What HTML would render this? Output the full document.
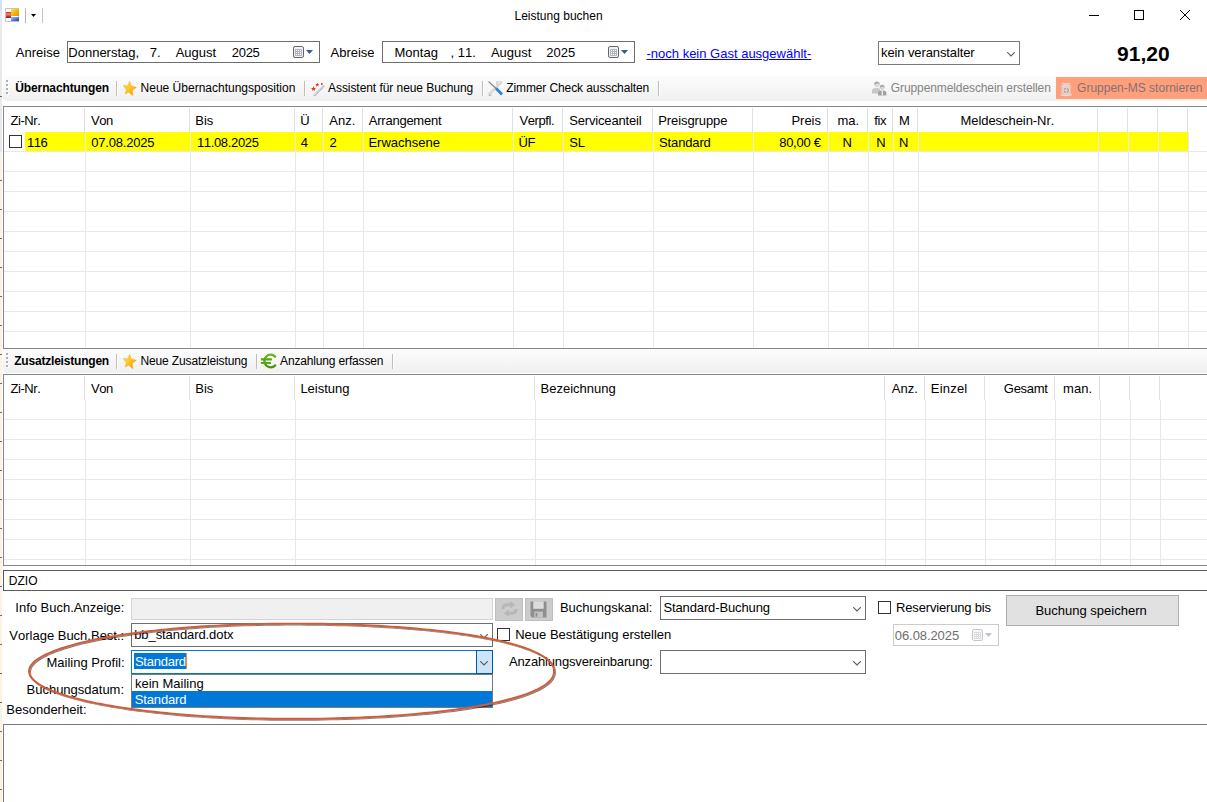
<!DOCTYPE html>
<html lang="de">
<head>
<meta charset="utf-8">
<title>Leistung buchen</title>
<style>
html,body{margin:0;padding:0;}
body{width:1207px;height:802px;overflow:hidden;background:#fff;position:relative;
  font-family:"Liberation Sans",sans-serif;font-size:13px;color:#000;font-kerning:none;}
.a{position:absolute;white-space:nowrap;line-height:1;}
.t{font-size:13px;line-height:16px;height:16px;}
.ui{font-size:12px;line-height:14px;height:14px;}
.sm{font-size:12px;line-height:14px;height:14px;}
.big{font-size:21px;line-height:24px;height:24px;font-weight:bold;}
.box{position:absolute;box-sizing:border-box;background:#fff;border:1px solid #7a7a7a;}
.vl{position:absolute;width:1px;background:#e8e8ec;}
.hl{position:absolute;height:1px;background:#e8e8ec;}
.tb{position:absolute;left:3px;width:1204px;height:25px;background:linear-gradient(#fcfcfc,#f6f6f6 55%,#f0f0f0);border-radius:3px 0 0 3px;}
.sep{position:absolute;width:1px;height:15px;background:#bdbdbd;box-shadow:1px 0 0 #fff;}
.grip{position:absolute;width:2px;height:2px;background:#aeaeae;box-shadow:1px 1px 0 #fff;}
.cb{position:absolute;box-sizing:border-box;width:13px;height:13px;border:1px solid #333;background:#fff;}
</style>
</head>
<body>
<div class="a" style="left:0;top:0;width:3px;height:802px;background:#fff;"></div>
<div class="a" style="left:0;top:0;width:2px;height:178px;background:#e9e9e9;"></div>
<div class="a" style="left:0;top:0;width:2px;height:11px;background:#cfe0f7;"></div>
<div class="a" style="left:0;top:96px;width:2px;height:1px;background:#666;"></div>
<div class="a" style="left:0;top:152px;width:2px;height:650px;background:repeating-linear-gradient(#fcf2e2 0,#fcf2e2 28px,#6a6a6a 28px,#6a6a6a 29px);"></div>
<svg class="a" style="left:5px;top:8px" width="14" height="14" viewBox="0 0 14 14">
<defs>
<linearGradient id="ir" x1="0" y1="0" x2="0" y2="1"><stop offset="0" stop-color="#e8260e"/><stop offset="0.350" stop-color="#f08a84"/><stop offset="1" stop-color="#9a0606"/></linearGradient>
<linearGradient id="iy" x1="0" y1="0" x2="1" y2="1"><stop offset="0" stop-color="#ffe25a"/><stop offset="0.500" stop-color="#f2b800"/><stop offset="1" stop-color="#d99a00"/></linearGradient>
<linearGradient id="ib" x1="0" y1="0" x2="1" y2="1"><stop offset="0" stop-color="#a6c6ff"/><stop offset="0.500" stop-color="#4a86f0"/><stop offset="1" stop-color="#1440a8"/></linearGradient>
</defs>
<rect x="0.500" y="0.500" width="13" height="13" fill="#fff" stroke="#c2c2cc"/>
<rect x="1" y="4" width="5" height="6" fill="url(#ir)"/>
<rect x="6" y="1" width="8" height="7" fill="url(#iy)"/>
<rect x="6" y="9" width="8" height="4" fill="url(#ib)"/>
</svg>
<div class="a" style="left:25px;top:8px;width:1px;height:15px;background:#b6b6b6"></div>
<div class="a" style="left:42px;top:8px;width:1px;height:15px;background:#c2c2c2"></div>
<svg class="a" style="left:31px;top:14px" width="5" height="3" viewBox="0 0 5 3"><path d="M0 0h5L2.500 3z" fill="#000"/></svg>
<svg class="a" style="left:1088px;top:9px" width="104" height="14" viewBox="0 0 104 14" fill="none" stroke="#000" stroke-width="1">
  <path d="M1 6.500h10"/>
  <rect x="46.500" y="1.500" width="9" height="9"/>
  <path d="M92 1l10 10M102 1L92 11"/>
</svg>
<div class="box" style="left:67px;top:41px;width:253px;height:22px;border-color:#6e6e6e;"></div>
<div class="box" style="left:382px;top:41px;width:253px;height:22px;border-color:#6e6e6e;"></div>
<div class="box" style="left:878px;top:41px;width:142px;height:24px;border-color:#7a7a7a;"></div>
<svg class="a" style="left:1007px;top:52px" width="8" height="5" viewBox="0 0 8 5" fill="none" stroke="#5a5a5a" stroke-width="1.100"><path d="M0.200 0.200L4 4L7.800 0.200"/></svg>
<svg class="a" style="left:293px;top:46px" width="21" height="13" viewBox="0 0 21 13">
<rect x="0.500" y="0.500" width="10" height="11" rx="1.600" fill="#eef2fb" stroke="#6b5f5f"/>
<rect x="2" y="3" width="7" height="7" fill="#b2b6be"/>
<path d="M3 4h1v1h-1zM5 4h1v1h-1zM7 4h1v1h-1zM3 6h1v1h-1zM5 6h1v1h-1zM7 6h1v1h-1zM3 8h1v1h-1zM5 8h1v1h-1zM7 8h1v1h-1z" fill="#fff"/>
<path d="M13 4h7l-3.500 4z" fill="#3b5a8c"/>
</svg>
<svg class="a" style="left:608px;top:46px" width="21" height="13" viewBox="0 0 21 13">
<rect x="0.500" y="0.500" width="10" height="11" rx="1.600" fill="#eef2fb" stroke="#6b5f5f"/>
<rect x="2" y="3" width="7" height="7" fill="#b2b6be"/>
<path d="M3 4h1v1h-1zM5 4h1v1h-1zM7 4h1v1h-1zM3 6h1v1h-1zM5 6h1v1h-1zM7 6h1v1h-1zM3 8h1v1h-1zM5 8h1v1h-1zM7 8h1v1h-1z" fill="#fff"/>
<path d="M13 4h7l-3.500 4z" fill="#3b5a8c"/>
</svg>
<div class="tb" style="top:76px;"></div>
<div class="grip" style="left:6px;top:80px;"></div>
<div class="grip" style="left:6px;top:84px;"></div>
<div class="grip" style="left:6px;top:88px;"></div>
<div class="grip" style="left:6px;top:92px;"></div>
<div class="sep" style="left:116px;top:81px;"></div>
<div class="sep" style="left:304px;top:81px;"></div>
<div class="sep" style="left:482px;top:81px;"></div>
<div class="sep" style="left:658px;top:81px;"></div>
<div class="a" style="left:1056px;top:77px;width:151px;height:22px;background:#ffa07a;"></div>
<svg class="a" style="left:123px;top:81px" width="15" height="16" viewBox="0 0 15 16">
<defs><linearGradient id="sg12381" x1="0" y1="0" x2="1" y2="1"><stop offset="0" stop-color="#ffe64a"/><stop offset="0.500" stop-color="#ffc420"/><stop offset="1" stop-color="#f08a10"/></linearGradient></defs>
<path d="M6.600 0.200L8.200 5L13.400 6.300L9.300 9.400L9.900 14.800L5.700 11.300L2.100 13L3.400 8.600L0 4.400L4.700 4.900z" fill="url(#sg12381)" stroke="#f0a010" stroke-width="0.400"/>
</svg>
<svg class="a" style="left:311px;top:82px" width="14" height="15" viewBox="0 0 14 15">
<path d="M3.400 13.300L12.600 4" stroke="#c9d6e4" stroke-width="2.200" stroke-linecap="round"/>
<path d="M4 13.600L13 4.600" stroke="#5d8ab6" stroke-width="0.900" stroke-dasharray="1 1"/>
<path d="M2.500 4.300l0.700 1.700l1.900 0.100l-1.500 1.200l0.500 1.800l-1.600-1l-1.600 1l0.500-1.800l-1.400-1.200l1.800-0.100z" fill="#e63a0e"/>
<path d="M6.300 0.600l0.600 1.400l1.500 0.100l-1.200 1l0.400 1.500l-1.300-0.800l-1.300 0.800l0.400-1.500l-1.200-1l1.500-0.100z" fill="#e63a0e"/>
<rect x="10" y="1" width="1.600" height="2" fill="#ee4a10"/>
</svg>
<svg class="a" style="left:488px;top:81px" width="16" height="16" viewBox="0 0 16 16">
<path d="M1 13.500L10 4.500" stroke="#dcdcdc" stroke-width="3" stroke-linecap="round"/>
<path d="M1.200 14.500l2.300-0.600" stroke="#9c9c9c" stroke-width="0.800"/>
<path d="M10 4.500a2.600 2.600 0 1 1 3.600 -2.300l-1.600 1.300l-1.600-0.400" fill="#e4e4e4" stroke="#b0b0b0" stroke-width="0.600"/>
<path d="M0.500 0.500L8 7.500" stroke="#868686" stroke-width="1.100"/>
<path d="M8 7.300L14 13.500" stroke="#2a7fd9" stroke-width="2.700" stroke-linecap="butt"/>
</svg>
<svg class="a" style="left:871px;top:81px" width="17" height="15" viewBox="0 0 17 15">
<path d="M1 12.500v-3.200c0-1.500 2-2.300 4.800-2.300s3.200 0.800 3.200 2.300v3.200z" fill="#c6c6c6"/>
<circle cx="5.900" cy="3.600" r="2.600" fill="#dadada"/>
<path d="M3.100 3.600c0-2 1.200-3.100 2.800-3.100s2.900 1.200 2.900 3c-1-0.200-1.500-0.900-2-1.700c-0.800 1-2 1.600-3.700 1.800z" fill="#a6a6a6"/>
<path d="M7 14.500v-2.500c0-1.700 1.600-2.500 4.200-2.500s4.200 0.800 4.200 2.500v2.500z" fill="#a2a2a2"/>
<path d="M10.600 9.500h1.400v5h-1.400z" fill="#e8e8e8"/>
<circle cx="11.200" cy="6.600" r="2.400" fill="#d4d4d4"/>
<path d="M8.700 6.500c0-1.800 1.100-2.800 2.500-2.800s2.600 1 2.600 2.700c-0.900-0.200-1.400-0.700-1.800-1.400c-0.800 0.900-1.800 1.300-3.300 1.500z" fill="#a2a2a2"/>
</svg>
<svg class="a" style="left:1060px;top:83px" width="13" height="14" viewBox="0 0 13 14">
<ellipse cx="6.200" cy="11.800" rx="6" ry="1.400" fill="#f2d8cf"/>
<path d="M1.600 0.800c0-0.500 0.400-0.800 1-0.800h7c0.600 0 1 0.300 1 0.800v11.200h-9z" fill="#e9cfc7"/>
<path d="M2.200 1.200l0.800 0.600M10 1.200l-0.800 0.600M2.300 11l0.800-0.500" stroke="#a58f8a" stroke-width="0.700"/>
<circle cx="6.200" cy="7.400" r="2.100" fill="none" stroke="#a89690" stroke-width="1.100" stroke-dasharray="2.200 1"/>
</svg>
<div class="a" style="left:3px;top:106px;width:1210px;height:243px;box-sizing:border-box;border:1px solid #828790;background:#fff;"></div>
<div class="vl" style="left:84px;top:108px;height:24px;background:#e0e0e4;"></div>
<div class="vl" style="left:85px;top:132px;height:216px;"></div>
<div class="vl" style="left:189px;top:108px;height:24px;background:#e0e0e4;"></div>
<div class="vl" style="left:190px;top:132px;height:216px;"></div>
<div class="vl" style="left:294px;top:108px;height:24px;background:#e0e0e4;"></div>
<div class="vl" style="left:295px;top:132px;height:216px;"></div>
<div class="vl" style="left:322px;top:108px;height:24px;background:#e0e0e4;"></div>
<div class="vl" style="left:323px;top:132px;height:216px;"></div>
<div class="vl" style="left:362px;top:108px;height:24px;background:#e0e0e4;"></div>
<div class="vl" style="left:363px;top:132px;height:216px;"></div>
<div class="vl" style="left:512px;top:108px;height:24px;background:#e0e0e4;"></div>
<div class="vl" style="left:513px;top:132px;height:216px;"></div>
<div class="vl" style="left:562px;top:108px;height:24px;background:#e0e0e4;"></div>
<div class="vl" style="left:563px;top:132px;height:216px;"></div>
<div class="vl" style="left:652px;top:108px;height:24px;background:#e0e0e4;"></div>
<div class="vl" style="left:653px;top:132px;height:216px;"></div>
<div class="vl" style="left:752px;top:108px;height:24px;background:#e0e0e4;"></div>
<div class="vl" style="left:753px;top:132px;height:216px;"></div>
<div class="vl" style="left:827px;top:108px;height:24px;background:#e0e0e4;"></div>
<div class="vl" style="left:828px;top:132px;height:216px;"></div>
<div class="vl" style="left:867px;top:108px;height:24px;background:#e0e0e4;"></div>
<div class="vl" style="left:868px;top:132px;height:216px;"></div>
<div class="vl" style="left:892px;top:108px;height:24px;background:#e0e0e4;"></div>
<div class="vl" style="left:893px;top:132px;height:216px;"></div>
<div class="vl" style="left:917px;top:108px;height:24px;background:#e0e0e4;"></div>
<div class="vl" style="left:918px;top:132px;height:216px;"></div>
<div class="vl" style="left:1097px;top:108px;height:24px;background:#e0e0e4;"></div>
<div class="vl" style="left:1098px;top:132px;height:216px;"></div>
<div class="vl" style="left:1127px;top:108px;height:24px;background:#e0e0e4;"></div>
<div class="vl" style="left:1128px;top:132px;height:216px;"></div>
<div class="vl" style="left:1157px;top:108px;height:24px;background:#e0e0e4;"></div>
<div class="vl" style="left:1158px;top:132px;height:216px;"></div>
<div class="vl" style="left:1187px;top:108px;height:24px;background:#e0e0e4;"></div>
<div class="vl" style="left:1188px;top:132px;height:216px;"></div>
<div class="hl" style="left:4px;top:151px;width:1203px;"></div>
<div class="hl" style="left:4px;top:171px;width:1203px;"></div>
<div class="hl" style="left:4px;top:191px;width:1203px;"></div>
<div class="hl" style="left:4px;top:211px;width:1203px;"></div>
<div class="hl" style="left:4px;top:231px;width:1203px;"></div>
<div class="hl" style="left:4px;top:251px;width:1203px;"></div>
<div class="hl" style="left:4px;top:271px;width:1203px;"></div>
<div class="hl" style="left:4px;top:291px;width:1203px;"></div>
<div class="hl" style="left:4px;top:311px;width:1203px;"></div>
<div class="hl" style="left:4px;top:331px;width:1203px;"></div>
<div class="a" style="left:25px;top:132px;width:1163px;height:19px;background:#ffff00;"></div>
<div class="vl" style="left:85px;top:132px;height:19px;background:#ebebef;"></div>
<div class="vl" style="left:190px;top:132px;height:19px;background:#ebebef;"></div>
<div class="vl" style="left:295px;top:132px;height:19px;background:#ebebef;"></div>
<div class="vl" style="left:323px;top:132px;height:19px;background:#ebebef;"></div>
<div class="vl" style="left:363px;top:132px;height:19px;background:#ebebef;"></div>
<div class="vl" style="left:513px;top:132px;height:19px;background:#ebebef;"></div>
<div class="vl" style="left:563px;top:132px;height:19px;background:#ebebef;"></div>
<div class="vl" style="left:653px;top:132px;height:19px;background:#ebebef;"></div>
<div class="vl" style="left:753px;top:132px;height:19px;background:#ebebef;"></div>
<div class="vl" style="left:828px;top:132px;height:19px;background:#ebebef;"></div>
<div class="vl" style="left:868px;top:132px;height:19px;background:#ebebef;"></div>
<div class="vl" style="left:893px;top:132px;height:19px;background:#ebebef;"></div>
<div class="vl" style="left:918px;top:132px;height:19px;background:#ebebef;"></div>
<div class="vl" style="left:1098px;top:132px;height:19px;background:#ebebef;"></div>
<div class="vl" style="left:1128px;top:132px;height:19px;background:#ebebef;"></div>
<div class="vl" style="left:1158px;top:132px;height:19px;background:#ebebef;"></div>
<div class="cb" style="left:9px;top:135px;"></div>
<div class="tb" style="top:349px;height:24px;border-radius:0 0 0 3px;"></div>
<div class="grip" style="left:6px;top:353px;"></div>
<div class="grip" style="left:6px;top:357px;"></div>
<div class="grip" style="left:6px;top:361px;"></div>
<div class="grip" style="left:6px;top:365px;"></div>
<div class="sep" style="left:116px;top:354px;"></div>
<div class="sep" style="left:256px;top:354px;"></div>
<div class="sep" style="left:392px;top:354px;"></div>
<svg class="a" style="left:123px;top:354px" width="15" height="16" viewBox="0 0 15 16">
<defs><linearGradient id="sg123354" x1="0" y1="0" x2="1" y2="1"><stop offset="0" stop-color="#ffe64a"/><stop offset="0.500" stop-color="#ffc420"/><stop offset="1" stop-color="#f08a10"/></linearGradient></defs>
<path d="M6.600 0.200L8.200 5L13.400 6.300L9.300 9.400L9.900 14.800L5.700 11.300L2.100 13L3.400 8.600L0 4.400L4.700 4.900z" fill="url(#sg123354)" stroke="#f0a010" stroke-width="0.400"/>
</svg>
<svg class="a" style="left:260px;top:353px" width="18" height="17" viewBox="0 0 18 17">
<defs><linearGradient id="eg" x1="0" y1="0" x2="0" y2="1"><stop offset="0" stop-color="#6ab41a"/><stop offset="1" stop-color="#46940a"/></linearGradient></defs>
<path d="M15.200 3.600A6.300 6.300 0 1 0 15.200 12.400" fill="none" stroke="url(#eg)" stroke-width="2.300" stroke-linecap="round"/>
<path d="M0.900 5.300h11v2.200h-11zM0.900 9h10.100v2h-10.100z" fill="#5aa612"/>
</svg>
<div class="a" style="left:3px;top:374px;width:1210px;height:192px;box-sizing:border-box;border:1px solid #828790;background:#fff;"></div>
<div class="vl" style="left:84px;top:376px;height:24px;background:#e0e0e4;"></div>
<div class="vl" style="left:85px;top:400px;height:165px;"></div>
<div class="vl" style="left:189px;top:376px;height:24px;background:#e0e0e4;"></div>
<div class="vl" style="left:190px;top:400px;height:165px;"></div>
<div class="vl" style="left:294px;top:376px;height:24px;background:#e0e0e4;"></div>
<div class="vl" style="left:295px;top:400px;height:165px;"></div>
<div class="vl" style="left:534px;top:376px;height:24px;background:#e0e0e4;"></div>
<div class="vl" style="left:535px;top:400px;height:165px;"></div>
<div class="vl" style="left:884px;top:376px;height:24px;background:#e0e0e4;"></div>
<div class="vl" style="left:885px;top:400px;height:165px;"></div>
<div class="vl" style="left:924px;top:376px;height:24px;background:#e0e0e4;"></div>
<div class="vl" style="left:925px;top:400px;height:165px;"></div>
<div class="vl" style="left:984px;top:376px;height:24px;background:#e0e0e4;"></div>
<div class="vl" style="left:985px;top:400px;height:165px;"></div>
<div class="vl" style="left:1054px;top:376px;height:24px;background:#e0e0e4;"></div>
<div class="vl" style="left:1055px;top:400px;height:165px;"></div>
<div class="vl" style="left:1099px;top:376px;height:24px;background:#e0e0e4;"></div>
<div class="vl" style="left:1100px;top:400px;height:165px;"></div>
<div class="vl" style="left:1129px;top:376px;height:24px;background:#e0e0e4;"></div>
<div class="vl" style="left:1130px;top:400px;height:165px;"></div>
<div class="vl" style="left:1159px;top:376px;height:24px;background:#e0e0e4;"></div>
<div class="vl" style="left:1160px;top:400px;height:165px;"></div>
<div class="hl" style="left:4px;top:419px;width:1203px;"></div>
<div class="hl" style="left:4px;top:439px;width:1203px;"></div>
<div class="hl" style="left:4px;top:459px;width:1203px;"></div>
<div class="hl" style="left:4px;top:479px;width:1203px;"></div>
<div class="hl" style="left:4px;top:499px;width:1203px;"></div>
<div class="hl" style="left:4px;top:519px;width:1203px;"></div>
<div class="hl" style="left:4px;top:539px;width:1203px;"></div>
<div class="hl" style="left:4px;top:559px;width:1203px;"></div>
<div class="box" style="left:3px;top:570px;width:1210px;height:21px;border-color:#5a5a5a;"></div>
<div class="box" style="left:131px;top:598px;width:362px;height:22px;background:#f0f0f0;border-color:#d4d4d4;"></div>
<div class="box" style="left:495px;top:598px;width:28px;height:23px;background:#cccccc;border-color:#bfbfbf;"></div>
<div class="box" style="left:525px;top:598px;width:28px;height:23px;background:#cccccc;border-color:#bfbfbf;"></div>
<svg class="a" style="left:501px;top:601px" width="17" height="16" viewBox="0 0 17 16">
<g fill="none" stroke="#b7b7b7" stroke-width="3" stroke-linecap="butt">
<path d="M1.800 8c0-3 2-4.300 4.800-4.300h3.400"/>
<path d="M15.200 8c0 3-2 4.300-4.800 4.300h-3.400"/>
</g>
<path d="M9.300 0l5 3.700l-5 3.700z" fill="#b7b7b7"/>
<path d="M7.700 16l-5-3.700l5-3.700z" fill="#b7b7b7"/>
</svg>
<svg class="a" style="left:530px;top:601px" width="17" height="17" viewBox="0 0 17 17">
<path d="M0.500 1.200c0-0.500 0.300-0.800 0.800-0.800h14.400c0.500 0 0.800 0.300 0.800 0.800v15.300h-14.500l-1.500-1.400z" fill="#8f8f8f"/>
<rect x="3.300" y="0.400" width="10.400" height="7.400" fill="#dcdcdc"/>
<rect x="4.300" y="10.600" width="8.600" height="5.900" fill="#c4c4c4"/>
<rect x="5.600" y="12" width="1.700" height="3.600" fill="#8a8a8a"/>
</svg>
<div class="box" style="left:660px;top:596px;width:206px;height:24px;border-color:#6e6e6e;"></div>
<svg class="a" style="left:853px;top:607px" width="8" height="5" viewBox="0 0 8 5" fill="none" stroke="#5a5a5a" stroke-width="1.100"><path d="M0.200 0.200L4 4L7.800 0.200"/></svg>
<div class="cb" style="left:878px;top:601px;"></div>
<div class="box" style="left:1006px;top:595px;width:173px;height:31px;background:#e1e1e1;border-color:#adadad;"></div>
<div class="box" style="left:131px;top:623px;width:362px;height:24px;border-color:#6e6e6e;"></div>
<svg class="a" style="left:480px;top:634px" width="8" height="5" viewBox="0 0 8 5" fill="none" stroke="#5a5a5a" stroke-width="1.100"><path d="M0.200 0.200L4 4L7.800 0.200"/></svg>
<div class="cb" style="left:497px;top:628px;"></div>
<div class="box" style="left:893px;top:624px;width:106px;height:22px;border-color:#cccccc;"></div>
<svg class="a" style="left:972px;top:629px" width="21" height="13" viewBox="0 0 21 13">
<rect x="0.500" y="0.500" width="10" height="11" rx="1.600" fill="#f6f7fa" stroke="#c9c6c6"/>
<rect x="2" y="3" width="7" height="7" fill="#d9dbdf"/>
<path d="M3 4h1v1h-1zM5 4h1v1h-1zM7 4h1v1h-1zM3 6h1v1h-1zM5 6h1v1h-1zM7 6h1v1h-1zM3 8h1v1h-1zM5 8h1v1h-1zM7 8h1v1h-1z" fill="#fff"/>
<path d="M13 4h7l-3.500 4z" fill="#bfc3ca"/>
</svg>
<div class="box" style="left:131px;top:650px;width:362px;height:24px;border-color:#0078d7;"></div>
<div class="a" style="left:134px;top:653px;width:52px;height:16px;background:#0078d7;"></div>
<div class="a" style="left:186px;top:653px;width:1px;height:16px;background:#ff8728;"></div>
<div class="box" style="left:476px;top:650px;width:17px;height:24px;background:#cce4f7;border-color:#0058a8;"></div>
<svg class="a" style="left:480px;top:661px" width="8" height="5" viewBox="0 0 8 5" fill="none" stroke="#5a5a5a" stroke-width="1.100"><path d="M0.200 0.200L4 4L7.800 0.200"/></svg>
<div class="box" style="left:660px;top:650px;width:206px;height:24px;border-color:#6e6e6e;"></div>
<svg class="a" style="left:853px;top:661px" width="8" height="5" viewBox="0 0 8 5" fill="none" stroke="#5a5a5a" stroke-width="1.100"><path d="M0.200 0.200L4 4L7.800 0.200"/></svg>
<div class="box" style="left:131px;top:674px;width:362px;height:34px;border-color:#7a7a7a;"></div>
<div class="a" style="left:132px;top:691px;width:360px;height:16px;background:#0078d7;"></div>
<div class="box" style="left:3px;top:724px;width:1210px;height:90px;border-color:#7a7a7a;"></div>
<!-- texts -->
<div class="a ui g" style="left:514.5px;top:9px;">Leistung buchen</div>
<div class="a t g" style="left:15.8px;top:45px;">Anreise</div>
<div class="a t g" style="left:68.3px;top:45px;">Donnerstag,</div>
<div class="a t g" style="left:149.8px;top:45px;">7.</div>
<div class="a t g" style="left:175.7px;top:45px;">August</div>
<div class="a t g" style="left:231.8px;top:45px;letter-spacing:-0.30px;">2025</div>
<div class="a t g" style="left:330.5px;top:45px;">Abreise</div>
<div class="a t g" style="left:394.5px;top:45px;">Montag</div>
<div class="a t g" style="left:450.6px;top:45px;">, 11.</div>
<div class="a t g" style="left:490.9px;top:45px;">August</div>
<div class="a t g" style="left:546.3px;top:45px;">2025</div>
<div class="a t g" style="left:646.5px;top:46px;color:#0000ff;text-decoration:underline;">-noch kein Gast ausgewählt-</div>
<div class="a t g" style="left:881.0px;top:45px;letter-spacing:-0.11px;">kein veranstalter</div>
<div class="a big g" style="left:1117.1px;top:42px;">91,20</div>
<div class="a ui g" style="left:15.3px;top:81px;letter-spacing:-0.12px;font-weight:bold;">Übernachtungen</div>
<div class="a ui g" style="left:140.6px;top:81px;">Neue Übernachtungsposition</div>
<div class="a ui g" style="left:328.0px;top:81px;letter-spacing:-0.06px;">Assistent für neue Buchung</div>
<div class="a ui g" style="left:506.2px;top:81px;letter-spacing:-0.10px;">Zimmer Check ausschalten</div>
<div class="a ui g" style="left:890.8px;top:81px;letter-spacing:-0.10px;color:#838383;">Gruppenmeldeschein erstellen</div>
<div class="a ui g" style="left:1077.1px;top:81px;color:#85707a;">Gruppen-MS stornieren</div>
<div class="a t g" style="left:10.4px;top:113px;letter-spacing:-0.40px;">Zi-Nr.</div>
<div class="a t g" style="left:90.9px;top:113px;letter-spacing:-0.40px;">Von</div>
<div class="a t g" style="left:195.3px;top:113px;">Bis</div>
<div class="a t g" style="left:300.2px;top:113px;">Ü</div>
<div class="a t g" style="left:329.3px;top:113px;">Anz.</div>
<div class="a t g" style="left:368.8px;top:113px;letter-spacing:-0.24px;">Arrangement</div>
<div class="a t g" style="left:519.5px;top:113px;letter-spacing:-0.40px;">Verpfl.</div>
<div class="a t g" style="left:569.2px;top:113px;letter-spacing:-0.16px;">Serviceanteil</div>
<div class="a t g" style="left:658.2px;top:113px;letter-spacing:-0.08px;">Preisgruppe</div>
<div class="a t g" style="left:791.4px;top:113px;">Preis</div>
<div class="a t g" style="left:837.5px;top:113px;">ma.</div>
<div class="a t g" style="left:874.2px;top:113px;letter-spacing:-0.40px;">fix</div>
<div class="a t g" style="left:899.1px;top:113px;">M</div>
<div class="a t g" style="left:960.5px;top:113px;letter-spacing:-0.06px;">Meldeschein-Nr.</div>
<div class="a t g" style="left:26.9px;top:135px;letter-spacing:-0.40px;">116</div>
<div class="a t g" style="left:91.2px;top:135px;letter-spacing:-0.19px;">07.08.2025</div>
<div class="a t g" style="left:196.9px;top:135px;letter-spacing:-0.33px;">11.08.2025</div>
<div class="a t g" style="left:300.8px;top:135px;">4</div>
<div class="a t g" style="left:329.4px;top:135px;">2</div>
<div class="a t g" style="left:368.4px;top:135px;">Erwachsene</div>
<div class="a t g" style="left:518.4px;top:135px;letter-spacing:-0.40px;">ÜF</div>
<div class="a t g" style="left:569.2px;top:135px;">SL</div>
<div class="a t g" style="left:659.1px;top:135px;letter-spacing:-0.15px;">Standard</div>
<div class="a t g" style="left:779.2px;top:135px;letter-spacing:-0.27px;">80,00 €</div>
<div class="a t g" style="left:842.5px;top:135px;">N</div>
<div class="a t g" style="left:876.2px;top:135px;">N</div>
<div class="a t g" style="left:899.0px;top:135px;">N</div>
<div class="a ui g" style="left:14.2px;top:354px;letter-spacing:-0.20px;font-weight:bold;">Zusatzleistungen</div>
<div class="a ui g" style="left:140.4px;top:354px;letter-spacing:-0.13px;">Neue Zusatzleistung</div>
<div class="a ui g" style="left:280.1px;top:354px;letter-spacing:-0.16px;">Anzahlung erfassen</div>
<div class="a t g" style="left:10.4px;top:381px;letter-spacing:-0.40px;">Zi-Nr.</div>
<div class="a t g" style="left:90.9px;top:381px;letter-spacing:-0.40px;">Von</div>
<div class="a t g" style="left:195.3px;top:381px;">Bis</div>
<div class="a t g" style="left:300.4px;top:381px;">Leistung</div>
<div class="a t g" style="left:540.5px;top:381px;">Bezeichnung</div>
<div class="a t g" style="left:891.8px;top:381px;">Anz.</div>
<div class="a t g" style="left:930.8px;top:381px;letter-spacing:0.20px;">Einzel</div>
<div class="a t g" style="left:1003.8px;top:381px;letter-spacing:-0.28px;">Gesamt</div>
<div class="a t g" style="left:1063.1px;top:381px;">man.</div>
<div class="a sm g" style="left:8.8px;top:574px;">DZIO</div>
<div class="a t g" style="left:15.3px;top:600px;">Info Buch.Anzeige:</div>
<div class="a t g" style="left:559.9px;top:600px;">Buchungskanal:</div>
<div class="a t g" style="left:663.5px;top:600px;letter-spacing:-0.13px;">Standard-Buchung</div>
<div class="a t g" style="left:896.1px;top:600px;letter-spacing:-0.17px;">Reservierung bis</div>
<div class="a t g" style="left:1035.4px;top:603px;">Buchung speichern</div>
<div class="a t g" style="left:9.3px;top:628px;">Vorlage Buch.Best.:</div>
<div class="a t g" style="left:134.2px;top:627px;letter-spacing:-0.08px;">bb_standard.dotx</div>
<div class="a t g" style="left:515.2px;top:627px;">Neue Bestätigung erstellen</div>
<div class="a t g" style="left:894.8px;top:628px;letter-spacing:-0.08px;color:#6d6d6d;">06.08.2025</div>
<div class="a t g" style="left:46.5px;top:655px;">Mailing Profil:</div>
<div class="a t g" style="left:134.9px;top:654px;letter-spacing:-0.23px;color:#fff;">Standard</div>
<div class="a t g" style="left:509.0px;top:654px;letter-spacing:-0.16px;">Anzahlungsvereinbarung:</div>
<div class="a t g" style="left:26.5px;top:682px;">Buchungsdatum:</div>
<div class="a t g" style="left:6.3px;top:702px;">Besonderheit:</div>
<div class="a t g" style="left:135.0px;top:676px;">kein Mailing</div>
<div class="a t g" style="left:134.8px;top:692px;letter-spacing:-0.16px;color:#fff;">Standard</div>
<!-- annotation -->
<svg class="a" style="left:0;top:600px;overflow:visible" width="600" height="140" viewBox="0 600 600 140">
  <defs><filter id="sh" x="-5%" y="-10%" width="110%" height="125%"><feGaussianBlur in="SourceAlpha" stdDeviation="0.700"/><feOffset dx="1.300" dy="1.300"/><feComponentTransfer><feFuncA type="linear" slope="0.500"/></feComponentTransfer><feMerge><feMergeNode/><feMergeNode in="SourceGraphic"/></feMerge></filter></defs>
  <path d="M554.0 671.2 L553.9 672.7 L553.7 674.1 L553.2 675.5 L552.6 676.9 L551.9 678.2 L551.0 679.5 L549.9 680.8 L548.6 682.0 L547.2 683.3 L545.6 684.5 L543.8 685.7 L541.9 686.9 L539.8 688.1 L537.5 689.3 L535.1 690.4 L532.5 691.6 L529.8 692.7 L526.9 693.8 L523.9 694.9 L520.7 696.0 L517.3 697.0 L513.9 698.0 L510.2 699.0 L506.4 700.0 L502.5 701.0 L498.4 702.0 L494.2 702.9 L489.9 703.8 L485.4 704.7 L480.8 705.5 L476.1 706.4 L471.2 707.2 L466.2 708.0 L461.1 708.7 L455.9 709.5 L450.5 710.2 L445.0 710.9 L439.5 711.5 L433.8 712.2 L428.0 712.8 L422.1 713.3 L416.1 713.9 L410.0 714.4 L403.8 714.9 L397.6 715.4 L391.2 715.8 L384.7 716.2 L378.2 716.6 L371.6 716.9 L364.8 717.3 L358.0 717.6 L351.2 717.8 L344.2 718.0 L337.1 718.2 L329.9 718.4 L322.7 718.6 L315.3 718.7 L307.7 718.7 L299.9 718.8 L291.5 718.8 L284.6 718.8 L277.8 718.7 L270.9 718.7 L264.1 718.5 L257.2 718.4 L250.4 718.2 L243.7 718.0 L236.9 717.8 L230.2 717.5 L223.6 717.2 L216.9 716.8 L210.4 716.5 L203.9 716.1 L197.4 715.6 L191.0 715.2 L184.7 714.7 L178.5 714.2 L172.3 713.6 L166.2 713.0 L160.3 712.4 L154.3 711.8 L148.5 711.1 L142.8 710.4 L137.2 709.7 L131.7 709.0 L126.3 708.2 L121.0 707.4 L115.9 706.6 L110.8 705.7 L105.9 704.9 L101.1 704.0 L96.4 703.1 L91.9 702.1 L87.5 701.2 L83.2 700.2 L79.1 699.2 L75.2 698.2 L71.3 697.1 L67.7 696.1 L64.2 695.0 L60.8 693.9 L57.6 692.8 L54.6 691.7 L51.7 690.6 L49.0 689.4 L46.4 688.3 L44.1 687.1 L41.8 685.9 L39.8 684.7 L37.9 683.5 L36.3 682.3 L34.7 681.1 L33.4 679.9 L32.2 678.6 L31.2 677.4 L30.4 676.2 L29.8 674.9 L29.4 673.7 L29.1 672.4 L29.0 671.2 L29.1 670.0 L29.4 668.7 L29.8 667.5 L30.4 666.2 L31.2 665.0 L32.2 663.8 L33.4 662.5 L34.7 661.3 L36.3 660.1 L37.9 658.9 L39.8 657.7 L41.8 656.5 L44.1 655.3 L46.4 654.1 L49.0 653.0 L51.7 651.8 L54.6 650.7 L57.6 649.6 L60.8 648.5 L64.2 647.4 L67.7 646.3 L71.3 645.3 L75.2 644.2 L79.1 643.2 L83.2 642.2 L87.5 641.2 L91.9 640.3 L96.4 639.3 L101.1 638.4 L105.9 637.5 L110.8 636.7 L115.9 635.8 L121.0 635.0 L126.3 634.2 L131.7 633.4 L137.2 632.7 L142.8 632.0 L148.5 631.3 L154.3 630.6 L160.2 630.0 L166.2 629.4 L172.3 628.8 L178.5 628.2 L184.7 627.7 L191.0 627.2 L197.4 626.8 L203.9 626.3 L210.4 625.9 L216.9 625.6 L223.6 625.2 L230.2 624.9 L236.9 624.6 L243.7 624.4 L250.4 624.2 L257.2 624.0 L264.1 623.9 L270.9 623.7 L277.8 623.7 L284.6 623.6 L291.5 623.6 L299.9 623.6 L307.7 623.7 L315.3 623.7 L322.7 623.8 L329.9 624.0 L337.1 624.2 L344.2 624.4 L351.2 624.6 L358.0 624.8 L364.8 625.1 L371.6 625.5 L378.2 625.8 L384.7 626.2 L391.2 626.6 L397.6 627.0 L403.8 627.5 L410.0 628.0 L416.1 628.5 L422.1 629.1 L428.0 629.6 L433.8 630.2 L439.5 630.9 L445.0 631.5 L450.5 632.2 L455.9 632.9 L461.1 633.7 L466.2 634.4 L471.2 635.2 L476.1 636.0 L480.8 636.9 L485.4 637.7 L489.9 638.6 L494.2 639.5 L498.4 640.4 L502.5 641.4 L506.4 642.4 L510.2 643.4 L513.9 644.4 L517.3 645.4 L520.7 646.4 L523.9 647.5 L526.9 648.6 L529.8 649.7 L532.5 650.8 L535.1 652.0 L537.5 653.1 L539.8 654.3 L541.9 655.5 L543.8 656.7 L545.6 657.9 L547.2 659.1 L548.6 660.4 L549.9 661.6 L551.0 662.9 L551.9 664.2 L552.6 665.5 L553.2 666.9 L553.7 668.3 L553.9 669.7Z" fill="none" stroke="#d25c38" stroke-width="1.900" stroke-linejoin="round" filter="url(#sh)"/>
</svg>
</body>
</html>
